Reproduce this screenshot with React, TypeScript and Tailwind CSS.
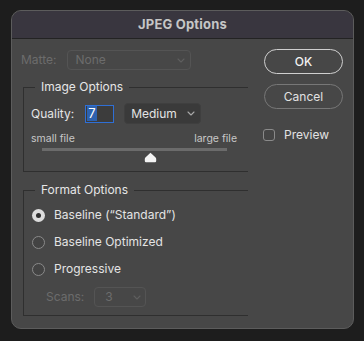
import React from "react";

const Chevron = ({ color = "#a8a8a8" }: { color?: string }) => (
  <svg width="8" height="5" viewBox="0 0 8 5" fill="none">
    <path d="M1 1l3 3 3-3" stroke={color} strokeWidth="1.1" strokeLinecap="round" strokeLinejoin="round" />
  </svg>
);

const Radio = ({ checked, label }: { checked?: boolean; label: string }) => (
  <div className="flex items-center h-[16px]">
    {checked ? (
      <div className="w-[13px] h-[13px] rounded-full bg-[#dcdcdc] flex items-center justify-center">
        <div className="w-[5px] h-[5px] rounded-full bg-[#2e2e2e]" />
      </div>
    ) : (
      <div className="w-[13px] h-[13px] rounded-full border border-[#8a8a8a] bg-[#434343]" />
    )}
    <span className="ml-[9px] text-[12px] text-[#e4e4e4]">{label}</span>
  </div>
);

const App = () => {
  return (
    <div
      className="w-[364px] h-[341px] bg-[#1d1d1d] pt-[10px] pl-[11px]"
      style={{ fontFamily: "Inter, 'Liberation Sans', sans-serif" }}
    >
      <div className="w-[343px] h-[319px] rounded-[10px] border border-[#5c5c5c] overflow-hidden flex flex-col bg-[#474747]">
        {/* Title bar */}
        <div className="h-[28px] shrink-0 bg-[#39363f] border-b border-[#232323] flex items-center justify-center">
          <span className="text-[13px] font-bold text-[#c6c6c6] tracking-[0.2px]">JPEG Options</span>
        </div>

        <div className="flex flex-1">
          {/* Left column */}
          <div className="w-[236px] pl-[9px] pt-[11px]">
            {/* Matte */}
            <div className="flex items-center h-[20px]">
              <span className="text-[12px] text-[#6c6c6c]">Matte:</span>
              <div className="ml-[11px] w-[124px] h-[20px] rounded-[4px] border border-[#545454] flex items-center justify-between pl-[7px] pr-[5px]">
                <span className="text-[12px] text-[#6c6c6c]">None</span>
                <Chevron color="#5e5e5e" />
              </div>
            </div>

            {/* Image Options */}
            <fieldset className="ml-[2px] mt-[9px] w-[225px] border-t border-l border-b border-[#2f2f2f] pl-[7px] pb-[9px]">
              <legend className="ml-[4px] px-[6px] text-[12px] leading-[16px] text-[#e6e6e6]">Image Options</legend>
              <div className="flex items-center h-[21px] mt-[8px]">
                <span className="text-[12px] text-[#e4e4e4]">Quality:</span>
                <div className="ml-[11px] w-[29px] h-[18px] border border-[#2f6fd6] bg-[#3c3c3c] flex items-center pl-[1px]">
                  <span className="bg-[#2d62b0] text-[13px] leading-[15px] text-white px-[1px]">7</span>
                </div>
                <div className="ml-[10px] w-[77px] h-[21px] rounded-[4px] bg-[#3a3a3a] border border-[#3f3f3f] flex items-center justify-between pl-[6px] pr-[5px]">
                  <span className="text-[12px] text-[#e4e4e4]">Medium</span>
                  <Chevron />
                </div>
              </div>
              <div className="flex justify-between w-[206px] mt-[8px] text-[10.5px] leading-[14px] text-[#c8c8c8]">
                <span>small file</span>
                <span>large file</span>
              </div>
              <div className="relative ml-[11px] mt-[2px] w-[185px] h-[14px]">
                <div className="h-[3px] bg-[#6b6b6b]" />
                <svg className="absolute left-[102px] top-[4px]" width="13" height="11" viewBox="0 0 13 11">
                  <path d="M6.5 0.8 L11.6 5.6 Q12.2 6.2 12.2 7 L12.2 9 Q12.2 10.2 11 10.2 L2 10.2 Q0.8 10.2 0.8 9 L0.8 7 Q0.8 6.2 1.4 5.6 Z" fill="#f4f4f4" />
                </svg>
              </div>
            </fieldset>

            {/* Format Options */}
            <fieldset className="ml-[2px] mt-[10px] w-[225px] border-t border-l border-b border-[#2f2f2f] pl-[8px] pb-[8px]">
              <legend className="ml-[3px] px-[6px] text-[12px] leading-[16px] text-[#e6e6e6]">Format Options</legend>
              <div className="mt-[9px] flex flex-col gap-[11px]">
                <Radio checked label={"Baseline (\u201CStandard\u201D)"} />
                <Radio label="Baseline Optimized" />
                <Radio label="Progressive" />
              </div>
              <div className="flex items-center mt-[10px] ml-[14px] h-[20px]">
                <span className="text-[12px] text-[#6c6c6c]">Scans:</span>
                <div className="ml-[10px] w-[52px] h-[20px] rounded-[4px] border border-[#545454] flex items-center justify-between pl-[10px] pr-[4px]">
                  <span className="text-[12px] text-[#6c6c6c]">3</span>
                  <Chevron color="#5e5e5e" />
                </div>
              </div>
            </fieldset>
          </div>

          {/* Right column */}
          <div className="pl-[16px] pt-[10px] flex flex-col">
            <button className="w-[79px] h-[25px] rounded-full border-[1.5px] border-[#cfcfcf] text-[12px] font-medium text-[#f2f2f2]">
              OK
            </button>
            <button className="mt-[10px] w-[79px] h-[25px] rounded-full border border-[#777777] text-[12px] text-[#e2e2e2]">
              Cancel
            </button>
            <div className="mt-[17px] flex items-center -ml-[1px]">
              <div className="w-[12px] h-[12px] rounded-[3px] border border-[#8a8a8a] bg-[#454545]" />
              <span className="ml-[9px] text-[12px] text-[#e2e2e2]">Preview</span>
            </div>
          </div>
        </div>
      </div>
    </div>
  );
};

export default App;
